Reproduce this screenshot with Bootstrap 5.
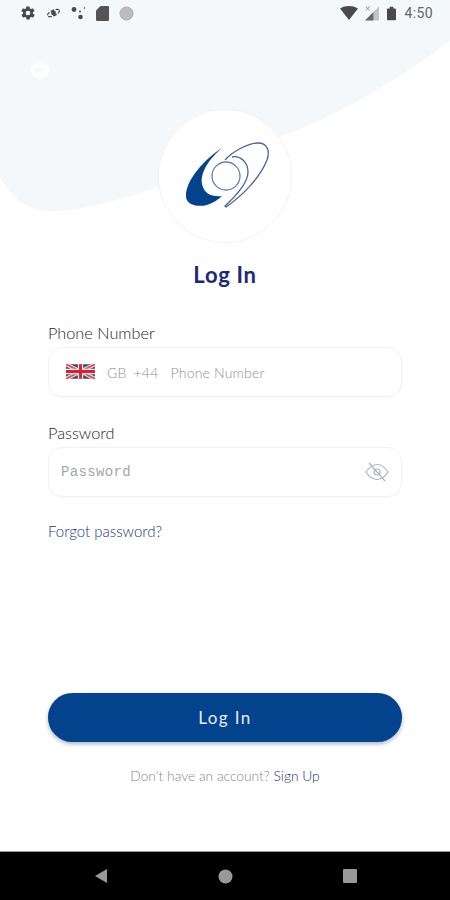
<!DOCTYPE html>
<html lang="en">
<head>
  <meta charset="UTF-8">
  <title>Log In</title>
  <meta name="viewport" content="width=device-width, initial-scale=1">
  <link rel="stylesheet" href="https://cdn.jsdelivr.net/npm/bootstrap@5.3.0/dist/css/bootstrap.min.css">
  <style>
    html, body { margin: 0; background: #fff; }
    body { font-family: Lato, "Noto Sans", sans-serif; color: #2b2f36; }
    .screen { position: relative; width: 450px; height: 900px; overflow: hidden; }
    /* pale shape behind the header */
    .bg-shape { position: absolute; top: 0; left: 0; z-index: 0; }
    .status-bar { position: relative; z-index: 1; height: 26px; padding: 0 17px 0 20px; }
    .status-left { gap: 10px; }
    .status-time { font-family: Roboto, sans-serif; font-size: 14px; color: #666; letter-spacing: .4px; margin-left: 8px; }
    .status-icon-gap { margin-left: 7px; }
    .back-row { position: relative; z-index: 1; height: 83px; padding: 30px 0 0 30px; }
    .logo-circle { position: relative; z-index: 1; width: 134px; height: 134px; background: #fff; border: 1px solid #f0f2f4; border-radius: 50%; }
    .page-title { position: relative; z-index: 1; font-size: 22px; font-weight: 700; color: #1b2a78; margin: 18px 0 0; line-height: 28px; letter-spacing: .7px; }
    .form-wrap { padding: 34px 48px 0; }
    .field-label { display: block; font-size: 16.3px; font-weight: 300; line-height: 20px; color: #22262c; margin-bottom: 4px; }
    .label-second { margin-top: 26px; }
    .field-box { height: 50px; border: 1px solid #eff1f3; border-radius: 14px; box-shadow: 0 1px 2px rgba(0,0,0,.03); }
    .phone-box { padding-left: 17px; }
    .pass-box { padding: 0 12px; }
    .field-hint { font-size: 14px; font-weight: 300; color: #8e9196; letter-spacing: .2px; }
    .hint-code { margin-left: 7px; }
    .hint-phone { margin-left: 12px; }
    .flag-gap { margin-right: 12px; margin-bottom: 2px; }
    .mono-hint { font-family: "Liberation Mono", monospace; font-size: 14px; color: #a3a6aa; letter-spacing: .35px; }
    .forgot-link { font-size: 15px; font-weight: 300; line-height: 20px; color: #1c3478; text-decoration: none; }
    .login-btn { height: 49px; background: #03428c; border: 0; border-radius: 25px; color: #e9eef5; font-size: 17px; font-weight: 400; letter-spacing: 1.4px; box-shadow: 0 2px 4px rgba(3,40,90,.35); }
    .signup-line { margin-top: 25px; padding-bottom: 66px; font-size: 13.8px; font-weight: 300; line-height: 18px; color: #85888e; }
    .signup-line a { color: #1c3478; text-decoration: none; }
    .nav-bar { height: 49px; background: #000; border-top: 1px solid #999; padding: 0 93px 0 94px; }
  </style>
</head>
<body>
  <div class="screen d-flex flex-column">
    <svg class="bg-shape" width="450" height="215" viewBox="0 0 450 215">
      <path d="M0 0H450V41C400 78 345 112 285 135C225 158 130 205 62 211C25 214 12 196 0 178Z" fill="#f4f8fa"/>
    </svg>

    <!-- Status bar -->
    <div class="status-bar d-flex align-items-center justify-content-between">
      <div class="status-left d-flex align-items-center">
        <svg width="16" height="16" viewBox="0 0 24 24" fill="#4a4a4a"><path d="M19.4 13c.1-.3.1-.7.1-1s0-.7-.1-1l2.100-1.600c.2-.2.2-.4.1-.6l-2-3.500c-.1-.2-.4-.3-.6-.2l-2.500 1c-.5-.4-1.100-.7-1.700-1l-.4-2.600c0-.2-.2-.4-.5-.4h-4c-.2 0-.5.2-.5.4l-.4 2.600c-.6.3-1.200.6-1.700 1l-2.500-1c-.2-.1-.5 0-.6.2l-2 3.500c-.1.2-.1.5.1.6L4.600 11c-.1.3-.1.7-.1 1s0 .7.1 1l-2.100 1.600c-.2.2-.2.4-.1.6l2 3.500c.1.2.4.3.6.2l2.500-1c.5.4 1.100.7 1.700 1l.4 2.600c0 .2.3.4.5.4h4c.3 0 .5-.2.5-.4l.4-2.600c.6-.3 1.200-.6 1.700-1l2.500 1c.2.1.5 0 .6-.2l2-3.500c.1-.2.1-.4-.1-.6zM12 15.500a3.500 3.500 0 1 1 0-7 3.500 3.500 0 0 1 0 7z"/></svg>
        <svg width="15" height="12" viewBox="0 0 16 12" fill="none" stroke="#4a4a4a"><ellipse cx="8" cy="6" rx="7" ry="2.800" transform="rotate(-25 8 6)" stroke-width="1.300" stroke-dasharray="4 1.500"/><circle cx="8" cy="6" r="2.600" fill="#4a4a4a" stroke="none"/></svg>
        <svg width="15" height="14" viewBox="0 0 15 14" fill="#4a4a4a"><circle cx="3" cy="3.500" r="2.400"/><circle cx="9.500" cy="11" r="2.300"/><circle cx="9" cy="5.500" r="1"/><circle cx="13.500" cy="2" r=".8"/></svg>
        <svg width="13" height="15" viewBox="0 0 13 15" fill="#555"><path d="M4.500 0H12a1 1 0 0 1 1 1v13a1 1 0 0 1-1 1H1a1 1 0 0 1-1-1V4.500z"/></svg>
        <svg width="15" height="15" viewBox="0 0 16 16"><circle cx="8" cy="8" r="7" fill="#bcbcbc" stroke="#aaa"/></svg>
      </div>
      <div class="d-flex align-items-center">
        <svg width="18" height="14" viewBox="0 0 18 14" fill="#4a4a4a"><path d="M0 2.500C5 -.8 13 -.8 18 2.500L9 14z"/></svg>
        <svg class="status-icon-gap" width="14" height="15" viewBox="0 0 15 15"><path d="M15 0V15H0z" fill="#c4c4c4"/><path d="M9 6V15H0z" fill="#6a6a6a"/><path d="M1 0l4 4M5 0L1 4" stroke="#888" stroke-width="1"/></svg>
        <svg class="ms-2" width="9" height="15" viewBox="0 0 10 15" fill="#4a4a4a"><path d="M3 0h4v2h2a1 1 0 0 1 1 1v11a1 1 0 0 1-1 1H1a1 1 0 0 1-1-1V3a1 1 0 0 1 1-1h2z"/></svg>
        <span class="status-time">4:50</span>
      </div>
    </div>

    <!-- Back arrow, nearly invisible white -->
    <div class="back-row">
      <svg width="20" height="20" viewBox="0 0 22 22"><circle cx="11" cy="11" r="10" fill="#fff" opacity=".85"/><path d="M15 11H7M10 8l-3 3 3 3" stroke="#f4f8fa" stroke-width="1.500" fill="none"/></svg>
    </div>

    <!-- Logo and title -->
    <div class="d-flex flex-column align-items-center">
      <div class="logo-circle d-flex align-items-center justify-content-center">
        <svg width="90" height="70" viewBox="0 0 90 70">
          <path d="M42 7C26 17 5 39 6 56C7 65 20 66 27 64C33 62 38 59 42 55C32 56 24 53 22 43C20 31 30 17 42 7Z" fill="#03428c"/>
          <circle cx="46" cy="35" r="14" fill="none" stroke="#6a7fb0" stroke-width="1.300"/>
          <path d="M45 19C52 11 68 2 78 2C88 2 90 11 87 19C80 37 62 55 46 66L45 65C58 53 68 41 68 31C68 21 60 14 52 16" fill="none" stroke="#4a639e" stroke-width="1.300"/>
        </svg>
      </div>
      <h1 class="page-title">Log In</h1>
    </div>

    <!-- Form -->
    <div class="form-wrap flex-grow-1 d-flex flex-column">
      <label class="field-label">Phone Number</label>
      <div class="field-box phone-box d-flex align-items-center">
        <svg class="flag-gap" width="29" height="15" viewBox="0 0 60 30">
          <rect width="60" height="30" fill="#3a4a82"/>
          <path d="M0 0L60 30M60 0L0 30" stroke="#f6dfe2" stroke-width="8"/>
          <path d="M0 0L60 30M60 0L0 30" stroke="#e0505f" stroke-width="4"/>
          <path d="M30 0V30M0 15H60" stroke="#fbe9ea" stroke-width="11"/>
          <path d="M30 0V30M0 15H60" stroke="#d8232f" stroke-width="6"/>
        </svg>
        <span class="field-hint">GB</span>
        <span class="field-hint hint-code">+44</span>
        <span class="field-hint hint-phone">Phone Number</span>
      </div>

      <label class="field-label label-second">Password</label>
      <div class="field-box pass-box d-flex align-items-center justify-content-between">
        <span class="mono-hint">Password</span>
        <svg width="24" height="20" viewBox="0 0 24 20" fill="none" stroke="#b0b3b7" stroke-width="1.200">
          <path d="M1 10C5 4 9 2.500 12 2.500S19 4 23 10C19 16 15 17.500 12 17.500S5 16 1 10Z"/>
          <circle cx="12" cy="10" r="3"/>
          <path d="M4 1L20 19"/>
        </svg>
      </div>

      <a class="forgot-link mt-4" href="#">Forgot password?</a>

      <button class="login-btn btn w-100 mt-auto">Log In</button>
      <p class="signup-line text-center mb-0">Don't have an account? <a href="#">Sign Up</a></p>
    </div>

    <!-- Android nav bar -->
    <div class="nav-bar d-flex align-items-center justify-content-between">
      <svg width="14" height="14" viewBox="0 0 14 14" fill="#999"><path d="M13 0V14L1 7z"/></svg>
      <svg width="15" height="15" viewBox="0 0 15 15" fill="#999"><circle cx="7.500" cy="7.500" r="7"/></svg>
      <svg width="14" height="14" viewBox="0 0 14 14" fill="#999"><rect width="14" height="14" rx="1"/></svg>
    </div>
  </div>
  <script src="https://cdn.jsdelivr.net/npm/bootstrap@5.3.0/dist/js/bootstrap.bundle.min.js"></script>
</body>
</html>
